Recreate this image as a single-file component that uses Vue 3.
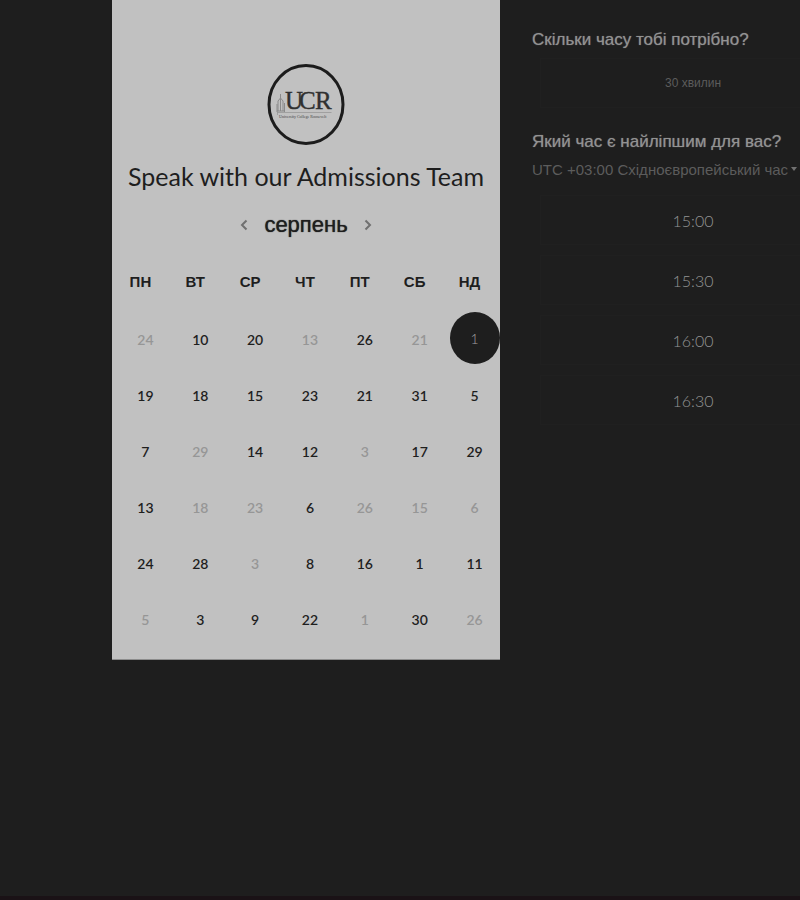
<script setup>
import { ref } from 'vue'

const weekdays = ['ПН', 'ВТ', 'СР', 'ЧТ', 'ПТ', 'СБ', 'НД']
const off = (n) => ({ n, disabled: true })
const on = (n) => ({ n, disabled: false })
const weeks = [
  [off(24), on(10), on(20), off(13), on(26), off(21), on(1)],
  [on(19), on(18), on(15), on(23), on(21), on(31), on(5)],
  [on(7), off(29), on(14), on(12), off(3), on(17), on(29)],
  [on(13), off(18), off(23), on(6), off(26), off(15), off(6)],
  [on(24), on(28), off(3), on(8), on(16), on(1), on(11)],
  [off(5), on(3), on(9), on(22), off(1), on(30), off(26)]
]
const times = ['15:00', '15:30', '16:00', '16:30']
const selected = ref('0-6')
const zone = ref('eet')
</script>

<template>
  <main class="page">
    <section class="card">
      <svg class="logo" viewBox="0 0 78 82" role="img" aria-label="UCR">
        <ellipse cx="39" cy="40.500" rx="37" ry="39" fill="none" stroke="#1c1c1c" stroke-width="3" />
        <path d="M13.500 30v7M11 47V37l2.500-3 2.500 3v10M13.500 36v11M10 40v8M17.500 39v9M10 47h8" fill="none" stroke="#8a8a8a" stroke-width="1" />
        <text class="logo-name" x="18 32 48" y="45">UCR</text>
        <path d="M10.500 48v3M10.500 48.500h54" fill="none" stroke="#8a8a8a" stroke-width="0.6" />
        <text class="logo-sub" x="12" y="54">University College Roosevelt</text>
      </svg>
      <h1 class="title">Speak with our Admissions Team</h1>
      <div class="month">
        <button class="arrow" type="button" aria-label="Попередній місяць">
          <svg viewBox="0 0 8 12"><path d="M6.500 1.500L2 6l4.500 4.500" /></svg>
        </button>
        <h2 class="month-name">серпень</h2>
        <button class="arrow" type="button" aria-label="Наступний місяць">
          <svg viewBox="0 0 8 12"><path d="M1.500 1.500L6 6l-4.500 4.500" /></svg>
        </button>
      </div>
      <table class="calendar">
        <thead>
          <tr><th v-for="d in weekdays" :key="d" scope="col">{{ d }}</th></tr>
        </thead>
        <tbody>
          <tr v-for="(week, w) in weeks" :key="w">
            <td v-for="(day, i) in week" :key="i">
              <button
                class="day"
                type="button"
                :class="{ selected: selected === `${w}-${i}` }"
                :disabled="day.disabled"
                @click="selected = `${w}-${i}`"
              >{{ day.n }}</button>
            </td>
          </tr>
        </tbody>
      </table>
    </section>

    <section class="side">
      <h2 class="question">Скільки часу тобі потрібно?</h2>
      <button class="slot duration" type="button">30 хвилин</button>
      <h2 class="question">Який час є найліпшим для вас?</h2>
      <div class="zone">
        <select v-model="zone" aria-label="Часовий пояс">
          <option value="eet">UTC +03:00 Східноєвропейський час</option>
        </select>
        <svg viewBox="0 0 6 4"><path d="M0 0h6L3 4z" /></svg>
      </div>
      <div class="times">
        <button v-for="t in times" :key="t" class="slot" type="button">{{ t }}</button>
      </div>
    </section>
  </main>
</template>

<style>
body {
  background: #1e1e1e;
}
</style>

<style scoped>
.page {
  box-sizing: border-box;
  display: grid;
  grid-template-columns: 14% 48.5% 1fr;
  align-items: start;
  min-height: 100vh;
  overflow: hidden;
  border-bottom: 4px solid #1a1216;
  background: #1e1e1e;
  font-family: "Liberation Sans", sans-serif;
}
h1, h2 {
  margin: 0;
}
button {
  padding: 0;
  border: 0;
  background: none;
  font-family: Lato, "Liberation Sans", sans-serif;
}
.card {
  grid-column: 2;
  box-sizing: border-box;
  padding: 64px 0 11px;
  border-bottom: 1px solid #8c8c8c;
  background: #c1c1c1;
  color: #1e1e1e;
}
.logo {
  display: block;
  width: 78px;
  height: 82px;
  margin: 0 auto;
}
.logo-name {
  font: 25px "Liberation Serif", serif;
  fill: #303030;
  stroke: #303030;
  stroke-width: 0.4;
}
.logo-sub {
  font: 4px "Liberation Serif", serif;
  fill: #444;
}
.title {
  margin-top: 14px;
  font: 400 25px/32px Lato, sans-serif;
  text-align: center;
  white-space: nowrap;
}
.month {
  display: flex;
  justify-content: center;
  align-items: center;
  gap: 16px;
  height: 58px;
  padding-top: 8px;
  box-sizing: border-box;
}
.month-name {
  font-size: 22px;
  font-weight: 400;
  line-height: 28px;
  text-shadow: 0 0 1px #1e1e1e;
}
.arrow svg {
  display: block;
  width: 8px;
  height: 12px;
  fill: none;
  stroke: #707070;
  stroke-width: 2;
}
.calendar {
  width: calc(100% - 4px);
  margin-left: 6px;
  border-collapse: collapse;
  table-layout: fixed;
}
th {
  height: 62px;
  padding: 0 10px 0 0;
  font-size: 15px;
  text-align: center;
}
td {
  height: 56px;
  padding: 0;
  text-align: center;
  vertical-align: top;
}
.day {
  width: 50px;
  height: 54px;
  color: #1e1e1e;
  font-size: 14px;
  font-weight: 600;
}
.day:disabled {
  color: #969696;
}
.day.selected {
  height: 52px;
  border-radius: 50%;
  background: #1e1e1e;
  color: #a0a0a0;
  font-weight: 300;
}
.side {
  display: flex;
  flex-direction: column;
  margin-right: -54px;
  padding: 28px 0 0 32px;
}
.question {
  color: #929292;
  font-size: 17px;
  font-weight: 400;
  line-height: 24px;
  text-shadow: 0 0 1px #707070;
}
.slot {
  height: 50px;
  margin: 0 8px;
  border: 1px solid #202020;
  color: #949494;
  font-size: 16px;
  font-weight: 300;
}
.duration {
  margin-top: 6px;
  margin-bottom: 22px;
  color: #5c5c5c;
  font-family: "Liberation Sans", sans-serif;
  font-size: 12px;
}
.zone {
  display: flex;
  align-items: center;
  gap: 2px;
  height: 30px;
}
.zone select {
  appearance: none;
  padding: 0;
  border: 0;
  background: none;
  color: #5c5c5c;
  font: 15px "Liberation Sans", sans-serif;
}
.zone svg {
  width: 6px;
  height: 4px;
  fill: #707070;
}
.times {
  display: flex;
  flex-direction: column;
  gap: 10px;
  margin-top: 11px;
}
</style>
